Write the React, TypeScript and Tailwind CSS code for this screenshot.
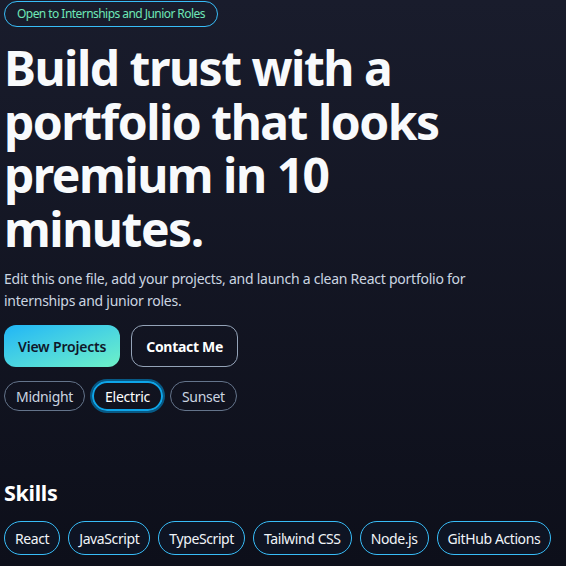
import React from 'react';

const themes = ['Midnight', 'Electric', 'Sunset'];
const skills = ['React', 'JavaScript', 'TypeScript', 'Tailwind CSS', 'Node.js', 'GitHub Actions'];

const App: React.FC = () => {
  const active = 'Electric';

  return (
    <div
      className="min-h-[566px] bg-gradient-to-b from-[#191c2c] to-[#0d0f1a] px-1 text-slate-50"
      style={{ fontFamily: '"Noto Sans", "Open Sans", sans-serif' }}
    >
      <span className="inline-block rounded-full border border-[#38bdf8] px-[12px] py-[4px] text-[12px] leading-[16px] tracking-[-0.55px] text-[#6ee7b7]">
        Open to Internships and Junior Roles
      </span>

      <h1 className="mt-[14px] max-w-[500px] text-[48px] font-bold leading-[53.5px] tracking-[-1.5px] text-[#f8fafc]">
        Build trust with a portfolio that looks premium in 10 minutes.
      </h1>

      <p className="mt-[13px] max-w-[520px] text-[14px] leading-[22px] tracking-[-0.25px] text-[#cbd5e1]">
        Edit this one file, add your projects, and launch a clean React portfolio for internships and junior roles.
      </p>

      <div className="mt-[13px] flex gap-[11px]">
        <button className="h-[42px] rounded-xl bg-gradient-to-br from-[#1fb5f6] to-[#6ef1c6] px-[14px] text-[14px] font-semibold tracking-[-0.2px] text-[#0f172a]">
          View Projects
        </button>
        <button className="h-[42px] rounded-xl border border-[#94a3b8] px-[14px] text-[14px] font-bold tracking-[-0.3px] text-white">
          Contact Me
        </button>
      </div>

      <div className="mt-[14px] flex gap-[7px]">
        {themes.map((t) =>
          t === active ? (
            <button
              key={t}
              className="h-[30px] rounded-full border-2 border-[#0ea5e9] px-[11px] text-[14px] tracking-[-0.3px] text-white ring-2 ring-[#075985]"
            >
              {t}
            </button>
          ) : (
            <button
              key={t}
              className="h-[30px] rounded-full border border-[#64748b] px-[11px] text-[14px] tracking-[-0.3px] text-[#cbd5e1]"
            >
              {t}
            </button>
          )
        )}
      </div>

      <h2 className="mt-[68px] text-[21.5px] font-bold leading-[28px] tracking-[-0.3px] text-white">Skills</h2>

      <div className="mt-[14px] flex gap-2">
        {skills.map((s) => (
          <span
            key={s}
            className="flex h-[34px] shrink-0 items-center whitespace-nowrap rounded-full border border-[#38bdf8] bg-[#0f172a]/60 px-[10px] text-[14px] tracking-[-0.4px] text-[#f1f5f9]"
          >
            {s}
          </span>
        ))}
      </div>
    </div>
  );
};

export default App;
